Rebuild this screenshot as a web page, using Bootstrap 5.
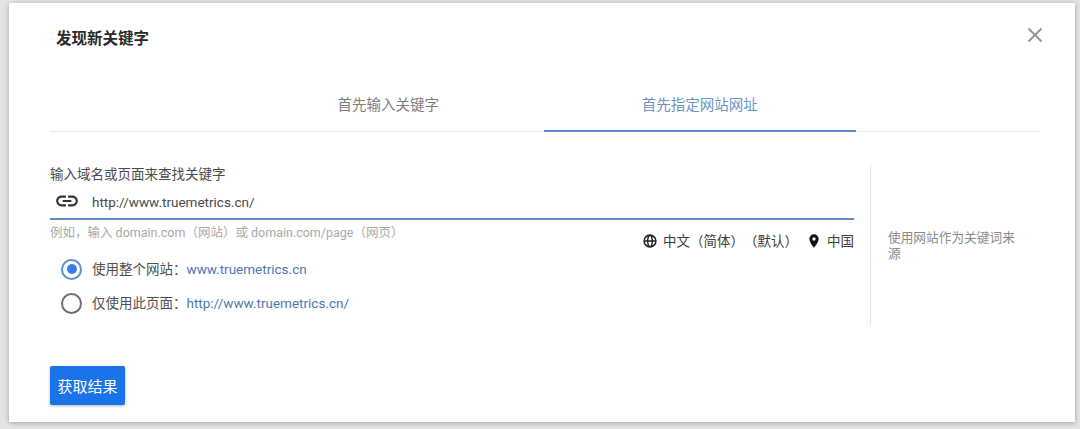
<!DOCTYPE html>
<html lang="zh-CN">
<head>
  <meta charset="UTF-8" />
  <meta name="viewport" content="width=device-width, initial-scale=1" />
  <title>发现新关键字</title>
  <link href="https://cdn.jsdelivr.net/npm/bootstrap@5.3.0/dist/css/bootstrap.min.css" rel="stylesheet" />
  <style>
    html, body { height: 100%; }
    body {
      background: #e4e4e4;
      font-family: Roboto, "Liberation Sans", "Noto Sans CJK SC", sans-serif;
      color: #3c3c3c;
      overflow: hidden;
      text-spacing-trim: space-all;
    }
    .kw-dialog {
      width: 1066px;
      height: 419px;
      margin: 3px 0 0 9px;
      padding: 0 35px 0 41px;
      background: #fff;
      box-shadow: 0 1px 5px rgba(0, 0, 0, .3);
    }
    .kw-head { height: 84px; padding: 0 0 0 6px; }
    .kw-title { font-size: 15.5px; font-weight: 700; color: #2b2b2b; margin: 23px 0 0; line-height: 26px; }
    .kw-close { margin: 23px -4px 0 0; width: 18px; height: 18px; background: none; border: 0; padding: 0; line-height: 0; }
    .kw-tabs { height: 45px; padding-right: 2px; border-bottom: 1px solid #e8e8e8; }
    .kw-tab {
      width: 311.5px;
      height: 45px;
      padding: 0;
      border: 0;
      background: none;
      font-size: 14.5px;
      line-height: 38px;
      text-align: center;
      color: #7d7d7d;
      display: block;
    }
    .kw-tab-on { color: #6c94c8; border-bottom: 2px solid #5f8ccb; }
    .kw-body { height: 160px; margin-top: 33px; }
    .kw-left { width: 804px; flex-shrink: 0; }
    .kw-label { font-size: 13.5px; line-height: 18px; color: #4c4c4c; margin: 0; }
    .kw-field { height: 37px; border-bottom: 2px solid #5c8cc4; padding-left: 4px; }
    .kw-input {
      border: 0;
      outline: 0;
      padding: 0;
      flex-grow: 1;
      height: 24px;
      font: 13.5px Roboto, "Liberation Sans", sans-serif;
      color: #4a4a4a;
      margin: 2px 0 0 12px;
    }
    .kw-hint { font-size: 12.5px; color: #a9a9a9; line-height: 18px; margin-top: 4px; }
    .kw-locale { font-size: 13.5px; color: #404040; line-height: 18px; margin-top: 12px; }
    .kw-globe { margin-right: 5px; }
    .kw-pin { margin: 0 5px 0 8px; }
    .kw-radios { margin: 2px 0 0 11px; }
    .kw-radio { height: 34px; font-size: 13.5px; color: #505050; }
    .kw-radio a { color: #4f76b4; text-decoration: none; }
    .kw-mark {
      width: 21px; height: 21px; margin-right: 10px;
      border: 2px solid #707070; border-radius: 50%;
      flex-shrink: 0;
    }
    .kw-mark-on { border-color: #5f90d0; padding: 3.5px; }
    .kw-mark-on::before { content: ""; display: block; width: 10px; height: 10px; border-radius: 50%; background: #3b7de8; }
    .kw-side {
      width: 170px;
      margin-left: 16px;
      padding: 65px 20px 0 17px;
      border-left: 1px solid #e2e2e2;
      font-size: 12.7px;
      line-height: 16px;
      color: #8a8a8a;
    }
    .kw-submit {
      display: block;
      width: 75px;
      height: 39px;
      margin-top: 41px;
      padding: 3px 0 0;
      border: 0;
      border-radius: 2px;
      background: #1a73e8;
      color: #fff;
      font-size: 15px;
      box-shadow: 0 1px 3px rgba(0, 0, 0, .3);
    }
  </style>
</head>
<body>
  <div class="kw-dialog">
    <div class="kw-head d-flex justify-content-between align-items-start">
      <h1 class="kw-title">发现新关键字</h1>
      <button type="button" class="kw-close" aria-label="关闭">
        <svg width="18" height="18" viewBox="0 0 18 18"><path d="M2.5 2.500l13 13M15.500 2.500l-13 13" stroke="#949494" stroke-width="2" fill="none"/></svg>
      </button>
    </div>

    <div class="kw-tabs d-flex justify-content-center">
      <div class="kw-tab">首先输入关键字</div>
      <div class="kw-tab kw-tab-on">首先指定网站网址</div>
    </div>

    <div class="kw-body d-flex">
      <div class="kw-left">
        <p class="kw-label">输入域名或页面来查找关键字</p>
        <div class="kw-field d-flex align-items-center">
          <svg width="26" height="26" viewBox="0 0 24 24"><path fill="#333" d="M3.900 12c0-1.710 1.390-3.100 3.100-3.100h4V7H7c-2.760 0-5 2.240-5 5s2.240 5 5 5h4v-1.900H7c-1.710 0-3.100-1.390-3.100-3.100zM8 13h8v-2H8v2zm9-6h-4v1.900h4c1.710 0 3.100 1.390 3.100 3.100s-1.390 3.100-3.100 3.100h-4V17h4c2.760 0 5-2.240 5-5s-2.240-5-5-5z"/></svg>
          <input class="kw-input" type="text" value="http://www.truemetrics.cn/" />
        </div>
        <div class="d-flex justify-content-between align-items-start">
          <div class="kw-hint">例如，输入 domain.com（网站）或 domain.com/page（网页）</div>
          <div class="kw-locale d-flex align-items-center">
            <svg class="kw-globe" width="16" height="16" viewBox="0 0 24 24"><path fill="#222" d="M12 2a10 10 0 1 0 0 20 10 10 0 0 0 0-20zm7.900 9h-3.400a15 15 0 0 0-1.300-5.600A8 8 0 0 1 19.900 11zM12 4c1 1.200 2.200 3.700 2.500 7h-5C9.800 7.700 11 5.200 12 4zM8.800 5.400A15 15 0 0 0 7.500 11H4.100a8 8 0 0 1 4.700-5.600zM4.100 13h3.400a15 15 0 0 0 1.300 5.600A8 8 0 0 1 4.100 13zM12 20c-1-1.200-2.200-3.700-2.500-7h5c-.3 3.300-1.500 5.800-2.500 7zm3.200-1.400a15 15 0 0 0 1.300-5.600h3.400a8 8 0 0 1-4.700 5.600z"/></svg>
            <span>中文（简体）（默认）</span>
            <svg class="kw-pin" width="16" height="16" viewBox="0 0 24 24"><path fill="#111" d="M12 2a7 7 0 0 0-7 7c0 5.200 7 13 7 13s7-7.800 7-13a7 7 0 0 0-7-7zm0 9.500a2.500 2.500 0 1 1 0-5 2.500 2.500 0 0 1 0 5z"/></svg>
            <span>中国</span>
          </div>
        </div>
        <div class="kw-radios">
          <div class="kw-radio d-flex align-items-center"><span class="kw-mark kw-mark-on"></span><span>使用整个网站：<a href="#">www.truemetrics.cn</a></span></div>
          <div class="kw-radio d-flex align-items-center"><span class="kw-mark"></span><span>仅使用此页面：<a href="#">http://www.truemetrics.cn/</a></span></div>
        </div>
      </div>
      <div class="kw-side">使用网站作为关键词来源</div>
    </div>

    <button type="button" class="kw-submit">获取结果</button>
  </div>
</body>
</html>
